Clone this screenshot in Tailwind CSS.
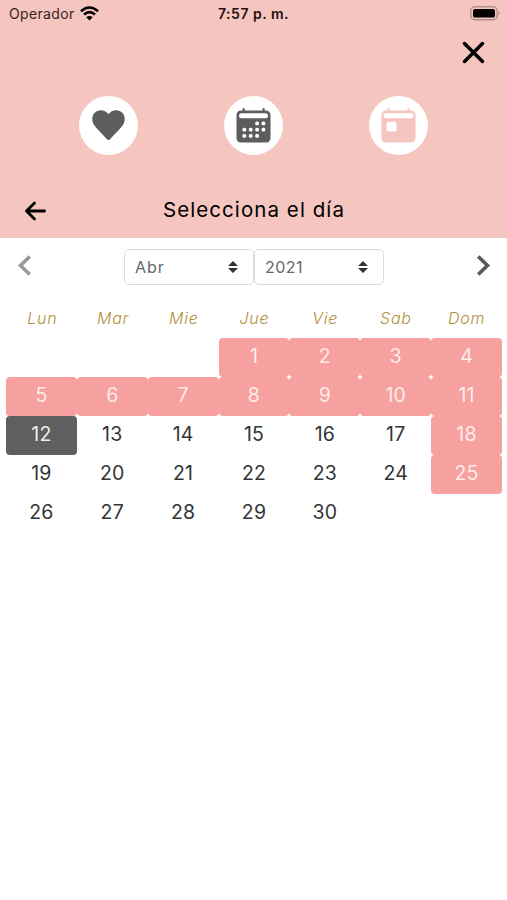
<!DOCTYPE html>
<html lang="es">
<head>
<meta charset="utf-8">
<title>Selecciona el día</title>
<script src="https://cdn.jsdelivr.net/npm/@tailwindcss/browser@4"></script>
</head>
<body class="w-[507px] h-[900px] overflow-hidden bg-white font-['Inter',sans-serif] text-[#333436]">
<header class="h-[238px] bg-[#f5c5bf] text-black flex flex-col">
  <div class="h-[28px] grid grid-cols-3 items-center text-[14px] leading-none">
    <div class="flex items-center gap-[5px] pl-[9px] text-[#3a2422]">
      <span class="tracking-[0.35px]">Operador</span>
      <svg class="mb-[2px]" width="19" height="15" viewBox="0 0 19 15" fill="none" stroke="#000" stroke-width="2.5"><path d="M1 5.3Q9.5-2.2 18 5.3M4 8.5Q9.5 3.8 15 8.5"/><path d="M6.3 11.3Q9.5 8.5 12.7 11.3L9.5 14.5Z" fill="#000" stroke="none"/></svg>
    </div>
    <div class="text-center font-semibold text-[#24110f] tracking-[0.5px]">7:57 p. m.</div>
    <div class="flex justify-end pr-[6px] pb-[2px]">
      <svg width="31" height="15" viewBox="0 0 31 15"><rect x=".8" y=".8" width="26.4" height="13" rx="4" fill="none" stroke="#b18f8b" stroke-width="1.4"/><rect x="3" y="3" width="22" height="8.6" rx="1.8"/><path d="M28.5 5Q31 7.3 28.5 9.6Z" fill="#b18f8b"/></svg>
    </div>
  </div>
  <div class="h-[68px] flex justify-end pr-[22px] pt-[13px]">
    <svg width="23" height="23" viewBox="0 0 23 23" stroke="#000" stroke-width="3.5" stroke-linecap="round"><path d="M2.5 2.5l18 18M20.5 2.5l-18 18"/></svg>
  </div>
  <div class="flex justify-center gap-[86px] pr-[1px]">
    <div class="size-[59px] rounded-full bg-white flex items-center justify-center">
      <svg width="33" height="31" viewBox="0 0 33 31"><path d="M16.5 4.2C20-.8 27-1.1 30.8 3.200c3 3.800 2.300 9.300-.8 13C26.500 20.500 22 24.800 17.800 29.500q-1.300 1.200-2.600 0C11 24.800 6.500 20.500 3 16.200-.1 12.500-.8 7 2.200 3.200 6-1.100 13-.8 16.500 4.200Z" fill="#5d5d5d"/></svg>
    </div>
    <div class="size-[59px] rounded-full bg-white flex items-center justify-center">
      <svg width="35" height="36" viewBox="0 0 35 36" fill="#5d5d5d"><rect x=".5" y="2.500" width="34" height="32" rx="4.500"/><rect x="6.500" y="0" width="2.200" height="6" rx="1"/><rect x="26.500" y="0" width="2.200" height="6" rx="1"/><path d="M3 8Q3 5.200 5.600 5.200H29.400Q32 5.200 32 8Q32 10.300 30 10.300H5Q3 10.300 3 8Z" fill="#fff"/><g fill="#fff"><rect x="19.200" y="13.500" width="3.800" height="3.800" rx="1.500"/><rect x="25.500" y="13.500" width="3.800" height="3.800" rx="1.500"/><rect x="6.400" y="19.700" width="3.800" height="3.800" rx="1.500"/><rect x="12.800" y="19.700" width="3.800" height="3.800" rx="1.500"/><rect x="19.200" y="19.700" width="3.800" height="3.800" rx="1.500"/><rect x="25.500" y="19.700" width="3.800" height="3.800" rx="1.500"/><rect x="6.400" y="25.900" width="3.800" height="3.800" rx="1.500"/><rect x="12.800" y="25.900" width="3.800" height="3.800" rx="1.500"/><rect x="19.200" y="25.900" width="3.800" height="3.800" rx="1.500"/></g></svg>
    </div>
    <div class="size-[59px] rounded-full bg-white flex items-center justify-center">
      <svg width="35" height="36" viewBox="0 0 35 36" fill="#f5c5bf"><rect x=".5" y="2.500" width="34" height="32" rx="4.500"/><rect x="6.500" y="0" width="2" height="6" rx="1"/><rect x="26.500" y="0" width="2" height="6" rx="1"/><path d="M2.500 8Q2.500 5.200 5.100 5.200H29.900Q32.500 5.200 32.500 8Q32.500 10.300 30.500 10.300H4.500Q2.500 10.300 2.500 8Z" fill="#fff"/><rect x="5.500" y="13.800" width="10" height="9.800" rx="1.800" fill="#fff"/></svg>
    </div>
  </div>
  <div class="h-[83px] grid grid-cols-[70px_1fr_70px] items-center pt-[27px]">
    <svg class="ml-[24px] mt-[2px]" width="23" height="20" viewBox="0 0 23 20" fill="none" stroke="#000" stroke-width="2.800" stroke-linecap="round" stroke-linejoin="round"><path d="M20.500 10H2.500M10.500 2l-8 8 8 8"/></svg>
    <h1 class="text-center text-[20.500px] leading-[28px] tracking-[1.070px] pl-px">Selecciona el día</h1>
  </div>
</header>
<main class="pl-[6px] pr-[5px]">
  <div class="h-[62px] flex justify-between pt-[11px] px-[11px]">
    <svg class="mt-[6px]" width="15" height="21" viewBox="0 0 15 21" fill="none" stroke="#999" stroke-width="3.600"><path d="M12.800 1.500L3.500 10.500l9.300 9"/></svg>
    <div class="flex text-[16px] text-[#63666a]">
      <div class="w-[130px] h-[36px] border-[1.500px] border-[#d9dde1] rounded-[5px] flex items-center justify-between pl-[10px] pr-[15px] bg-white"><span class="tracking-[0.900px]">Abr</span><svg width="10" height="12" viewBox="0 0 10 12" fill="#303438"><path d="M0 5L5 0l5 5ZM0 7h10l-5 5Z"/></svg></div>
      <div class="w-[130px] h-[36px] border-[1.500px] border-[#d9dde1] rounded-[5px] flex items-center justify-between pl-[10px] pr-[15px] bg-white"><span class="tracking-[0.500px]">2021</span><svg width="10" height="12" viewBox="0 0 10 12" fill="#303438"><path d="M0 5L5 0l5 5ZM0 7h10l-5 5Z"/></svg></div>
    </div>
    <svg class="mt-[6px]" width="15" height="21" viewBox="0 0 15 21" fill="none" stroke="#595959" stroke-width="3.600"><path d="M2.200 1.500l9.300 9-9.300 9"/></svg>
  </div>
  <div class="h-[38px] grid grid-cols-7 text-center text-[16px] leading-[36px] italic font-light tracking-[0.800px] text-[#b08f38] pl-px">
    <span>Lun</span><span>Mar</span><span>Mie</span><span>Jue</span><span>Vie</span><span>Sab</span><span>Dom</span>
  </div>
  <div class="grid grid-cols-7 auto-rows-[39.100px] text-center text-[19.500px] leading-[37px] tracking-[0.200px]">
    <span class="col-start-4 bg-[#f6a09f] text-[#ffece9] rounded-[4px]">1</span><span class="bg-[#f6a09f] text-[#ffece9] rounded-[4px]">2</span><span class="bg-[#f6a09f] text-[#ffece9] rounded-[4px]">3</span><span class="bg-[#f6a09f] text-[#ffece9] rounded-[4px]">4</span>
    <span class="bg-[#f6a09f] text-[#ffece9] rounded-[4px]">5</span><span class="bg-[#f6a09f] text-[#ffece9] rounded-[4px]">6</span><span class="bg-[#f6a09f] text-[#ffece9] rounded-[4px]">7</span><span class="bg-[#f6a09f] text-[#ffece9] rounded-[4px]">8</span><span class="bg-[#f6a09f] text-[#ffece9] rounded-[4px]">9</span><span class="bg-[#f6a09f] text-[#ffece9] rounded-[4px]">10</span><span class="bg-[#f6a09f] text-[#ffece9] rounded-[4px]">11</span>
    <span class="bg-[#5f5f5f] text-[#eeeeee] rounded-[4px]">12</span><span>13</span><span>14</span><span>15</span><span>16</span><span>17</span><span class="bg-[#f6a09f] text-[#ffece9] rounded-[4px]">18</span>
    <span>19</span><span>20</span><span>21</span><span>22</span><span>23</span><span>24</span><span class="bg-[#f6a09f] text-[#ffece9] rounded-[4px]">25</span>
    <span>26</span><span>27</span><span>28</span><span>29</span><span>30</span>
  </div>
</main>
</body>
</html>
